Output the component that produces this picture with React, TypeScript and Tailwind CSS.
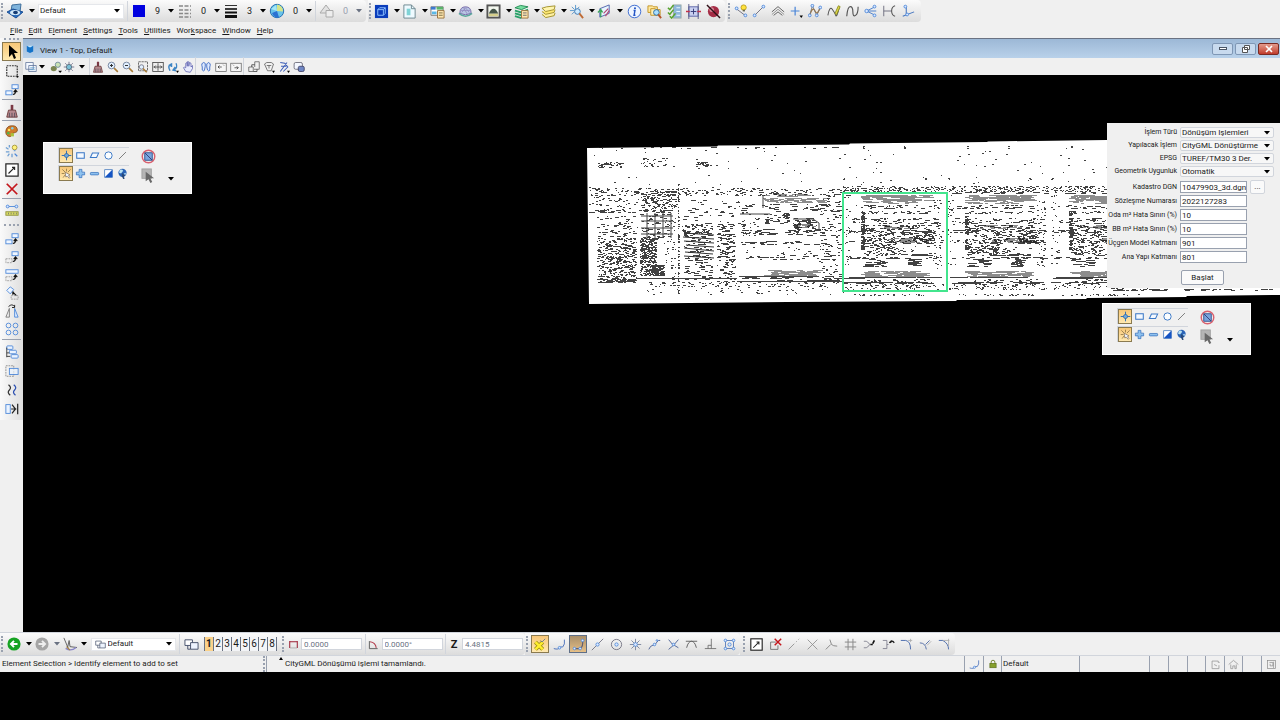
import React, { useState } from "react";

const blue = "#4a86d8";
const navy = "#2b4fb0";
const ink = "#333333";
const grey = "#8a8a8a";

function P({ d, s = ink, f = "none", w = 1 }: { d: string; s?: string; f?: string; w?: number }) {
  return <path d={d} stroke={s} fill={f} strokeWidth={w} />;
}

function Dot({ x, y, r = 1.6 }: { x: number; y: number; r?: number }) {
  return <circle cx={x} cy={y} r={r} stroke={blue} fill="#dbe8ff" />;
}

const icons: Record<string, React.ReactNode> = {
  template: <><P d="M5 2 14 1 13 9 4 8Z" s="#3f6f9c" f="#7fb4dc" /><P d="M0 9 6 6l10 3-7 6Z" s="#1c4f94" f="#2b6fc0" /><ellipse cx="8" cy="9.500" rx="5" ry="2.600" fill="#d3e9f8" /><ellipse cx="8.500" cy="9.500" rx="2.400" ry="1.800" fill="#163c74" /></>,
  swatch: <rect x="2" y="2" width="12" height="12" fill="#0000e0" />,
  styles: <path d="M2 3h12M2 7h12M2 10.500h12M2 14h12" stroke="#888" strokeWidth="1.400" strokeDasharray="4 1.500" />,
  weights: <><P d="M2 2.500h12" /><P d="M2 6h12" w={1.6} s="#111" /><P d="M2 9.500h12" w={2} s="#111" /><P d="M2 13.500h12" w={3} s="#111" /></>,
  globe: <><circle cx="8" cy="8" r="6.700" fill="#69c3ea" stroke="#2673b4" /><path d="M8 1.500a6.500 6.500 0 0 1 6 7L8 8Z" fill="#d5e58a" /><path d="M3 10 8 8l2 6.500C6 15 4 13 3 10Z" fill="#2b72d2" /><path d="M2 6 8 8 7 2Z" fill="#a5e7f5" /></>,
  triangle: <><P d="M7 2 13 10H1Z" s="#aaa" f="#e3e3e3" /><P d="M7 7.500h7v6.500H7Z" s="#aaa" f="#ededed" /></>,
  cube: <><rect x="1" y="1" width="14" height="14" fill="#0b3dbb" /><P d="M4 6h6v6H4ZM6 4h6v6M4 6l2-2M10 6l2-2M10 12l2-2" s="#8fc2ff" /></>,
  doc: <><P d="M2 1h8l4 4v10H2Z" s="#6d8790" f="#eefaff" /><P d="M10 1v4h4" s="#6d8790" /><rect x="5" y="5" width="4" height="7" fill="#7fd3d6" /></>,
  cards: <><P d="M1 3h13v9H1Z" s="#777" f="#fff" /><path d="M1 3h5v3H1z" fill="#3d7ad0" /><path d="M7 3h7v3H7z" fill="#5ab46a" /><path d="M2 8h5v3H2z" fill="#5bb8e6" /><P d="M8 7h7v8H8Z" s="#9a7340" f="#ffe7b0" /><P d="M9.500 9.500h4M9.500 12h4" s="#7a6c40" /></>,
  mesh: <><path d="M2 10q0-7 6-7t6 7q-6 3-12 0z" fill="#b9c6e4" stroke="#7468a8" /><path d="M4 9l4-5 4 5M3 7h10M6 4l4 7" stroke="#8f86bd" strokeWidth=".8" /><path d="M1 10q7 6 14 0" stroke="#5aa79d" strokeWidth="1.500" /></>,
  terrain: <><rect x="1.500" y="1.500" width="13" height="13" fill="#f3f7ef" stroke="#555" strokeWidth="2" /><path d="M3 10h10v3H3z" fill="#d6cf8c" /><path d="M3 10q2-5 5-5t5 5z" fill="#46564a" /></>,
  layersGreen: <><P d="M1 4 7 1.500 15 3 8 6Z" s="#278b56" f="#74dfa0" /><P d="M1 7 8 9 15 6" s="#29a169" w={2} /><P d="M1 10 8 12M1 13l7 2" s="#29a169" w={2} /><P d="M8 7h7v8H8Z" s="#9a7340" f="#ffe7b0" /><P d="M9.500 9.500h4M9.500 12h4" s="#6c6c6c" /></>,
  layersYellow: <><P d="M1 11l4 3.500 9-2 1-3" s="#a2912b" f="#fff0a0" /><P d="M1 8l4 3 9-2 1-3" s="#a2912b" f="#ffe871" /><P d="M1 4.500 5 8l9-2 1-4L6 3Z" s="#a2912b" f="#fff5ae" /></>,
  searchStar: <><path d="M7 1v5M1 7h5M3 3l3 3M11 3 9 5M3 11l3-3" stroke="#5997cd" /><circle cx="9" cy="8" r="3" stroke="#3b75b0" fill="#cdeaff" /><P d="M11 10l4 5" s="#bf6b35" w={2} /></>,
  sheet: <><P d="M3 5 13 1v9L3 14Z" s="#4f63ad" f="#e8f5ff" /><P d="M1 9l3-3 2 3M4 6v8" s="#3da55c" w={1.400} /><P d="M7 10l5-5M9 13l4-6" s="#b04a75" w={1.300} /></>,
  info: <><circle cx="8" cy="8" r="6.700" stroke="#3768cf" fill="#eef5ff" /><circle cx="8.500" cy="4.500" r="1.100" fill="#2455c6" /><P d="M7 7h1.500l-1 5H9" s="#2455c6" w={1.500} /></>,
  folderSearch: <><P d="M1 2h5l1 1h4v6H1Z" s="#c49423" f="#ffe9a0" /><P d="M4 5h5l1 1h4v6H4Z" s="#c49423" f="#fff1bb" /><circle cx="10" cy="9" r="3" fill="#a8deff" stroke="#2e6a9b" /><P d="M12 11l3 4" s="#b35429" w={2} /></>,
  checks: <><rect x="7" y="1" width="8" height="14" fill="#8fb7dc" stroke="#9aa" /><P d="M1 4l2 2 4-5M1 9l2 2 4-5M3 13l2 2 4-5" s="#57a42e" w={1.600} /><P d="M10 4h4M10 8h4M10 12h4" s="#e9f7ff" /></>,
  clip: <><rect x="3" y="3" width="10" height="10" fill="#c9d0f0" stroke="#5b64a9" /><P d="M3 0v16M13 0v16" s="#555a88" /><P d="M0 8h4M12 8h4" s="#c2304a" w={1.500} /><P d="M5 8h6M8 5v6" s="#333a77" /></>,
  noBall: <><circle cx="8" cy="8" r="6" fill="#a42c45" /><circle cx="6" cy="6" r="2.500" fill="#d9899a" /><P d="M1 1l14 14" s="#301018" w={1.500} /></>,
  bulbLine: <><P d="M2 5 14 14" s="#667" /><Dot x={3} y={5} /><Dot x={13} y={13} /><circle cx="11" cy="4" r="3" fill="#ffe23c" stroke="#b99b18" /><P d="M10 7.500h2.500" s="#665" w={2} /></>,
  line: <><P d="M3 13 13 3" s="#667" /><Dot x={3} y={13} /><Dot x={13} y={3} /></>,
  chevrons: <><P d="M1 9l7-6 7 6" s="#555" /><P d="M1 12l7-6 7 6" s="#888" /><P d="M3 13l5-4 5 4" s="#555" /></>,
  point: <><P d="M7 3v10M2 8h10" s={blue} w={1.400} /><path d="M12 13h4l-2 3z" fill="#000" /></>,
  bspline: <><P d="M2 13Q5 2 8 8t6-5" s="#a9793e" w={1.400} /><P d="M2 13 5 2l5 11 4-9" s="#777" /><Dot x={2} y={13} /><Dot x={5} y={2} /><Dot x={10} y={13} /><Dot x={14} y={4} /></>,
  curvePencil: <><P d="M1 13Q3 2 6 6t4 7 4-9" s="#555" w={1.200} /><P d="M9 11l4-9 2 1-4 9Z" s="#8a8a20" f="#e5dc4a" /></>,
  curve: <P d="M2 14Q3 3 6 3t3 6 3 4 3-10" s="#555" w={1.300} />,
  bisector: <><P d="M3 8 13 3M3 8l10 5M3 8h11" s="#3b75c8" /><Dot x={3} y={8} r={2} /><Dot x={12} y={3} /><Dot x={12} y={13} /></>,
  brackets: <><P d="M2 2v12M2 8h9" s="#667" /><P d="M15 2q-4 1-4 6t4 6" s="#555" w={1.200} /></>,
  perp: <><P d="M6 3v9M2 14 15 9" s="#4575bf" w={1.200} /><Dot x={5} y={3} /><Dot x={7} y={12} /></>,
  windowBox: <><P d="M1 2h10v9H1ZM5 6h10v8H5Z" s="#5a6f95" f="#f4f8ff" /><P d="M7 9h6M7 11.500h6" s="#5ea0cf" /></>,
  view: <><ellipse cx="5" cy="10" rx="4" ry="3.500" fill="#7b8650" /><circle cx="10.500" cy="5" r="3.500" stroke="#5e7890" fill="#c9e2b4" /><path d="M11 13h5l-2.500 3z" fill="#000" /></>,
  sun: <><circle cx="8" cy="8" r="3.500" fill="#7cc1d8" stroke="#456" /><P d="M8 1v3M8 12v3M1 8h3M12 8h3M3 3l2 2M11 11l2 2M13 3l-2 2M5 11l-2 2" s="#557" /></>,
  brush: <><P d="M8 1v6" s="#7a3944" w={3} /><path d="M4 7h8l2 8H2z" fill="#b7898e" stroke="#633" /><P d="M5 10v5M8 10v5M11 10v5" s="#534b58" /></>,
  zoomIn: <><circle cx="6" cy="6" r="4.500" stroke="#5a6b88" fill="#e1efff" /><P d="M4 6h4M6 4v4" w={1.400} /><P d="M9.500 9.500l5 5" s="#a87b35" w={2} /></>,
  zoomOut: <><circle cx="6" cy="6" r="4.500" stroke="#5a6b88" fill="#e1efff" /><P d="M4 6h4" w={1.400} /><P d="M9.500 9.500l5 5" s="#a87b35" w={2} /></>,
  windowArea: <><rect x="2" y="1" width="12" height="12" stroke="#444" strokeDasharray="3 1" /><circle cx="6" cy="8" r="3" stroke="#667" fill="#e0f0ff" /><P d="M8 10l5 5" s="#a87b35" w={2} /></>,
  fit: <><rect x="1" y="2" width="14" height="12" stroke="#333" /><P d="M8 3v10M2 8h12M5 6 3 8l2 2M11 6l2 2-2 2" /></>,
  rotate: <><P d="M4 13Q0 6 6 4v4M6 6H2" s="#3d85c5" w={2} /><P d="M12 3q3 6-3 9M11 8l-3 4 4 1" s="#3d85c5" w={1.800} /><path d="M12 13h4l-2 3z" fill="#000" /></>,
  hand: <P d="M5 14 2 9l1-1 2 1V3l2-1v5-6h2v6l1-5 2 1v5l2-2v4l-3 5Z" s="#5b5fae" f="#e8ebfc" />,
  feet: <><P d="M5 2q-4 1-2 6v4q2 3 3 0l1-5q1-5-2-5ZM11 2q-3 1-2 6l1 4q2 3 3 0V8q2-5-2-6Z" s="#4873c9" f="#dfeaff" w={1.300} /></>,
  prevView: <><rect x="1" y="3" width="14" height="11" stroke="#666" fill="#f6f6f6" /><P d="M4 8h5M4 8l2-2M4 8l2 2M11 5l1 1" /></>,
  nextView: <><rect x="1" y="3" width="14" height="11" stroke="#666" fill="#f6f6f6" /><P d="M6 9h5M11 9 9 7M11 9l-2 2M4 5l1 1" /></>,
  copyView: <><P d="M9 8V1h6v10H8M1 8h6v6H1Z" s="#555" /><P d="M5 8V5h4M7 14h5v-3" /></>,
  camera: <><P d="M2 4l3-2h6l3 2-3 9H6ZM5 6h6M8 6v4" s="#555" /><path d="M12 13h4l-2 3z" fill="#000" /></>,
  clipVol: <><P d="M3 2l6 1 4 5-6 6M12 2 3 14M4 7h7" s="#3f60b8" w={1.400} /><path d="M12 13h4l-2 3z" fill="#000" /></>,
  mask: <><rect x="1.500" y="2" width="11" height="9" rx="2" stroke="#556" fill="#f3f7ff" /><rect x="7" y="7" width="8" height="7" rx="2" fill="#6f87c5" stroke="#335" /></>,
  arrow: <path d="M5 1v12l3-3 2 5 2-1-2-5h4z" fill="#000" />,
  fence: <><rect x="2" y="2" width="12" height="12" stroke="#333" strokeWidth="1.400" strokeDasharray="2 1" /><path d="M13.500 13v3l2.500-1.500z" fill="#000" /></>,
  copy: <><rect x="8" y="2" width="7" height="4.500" stroke={blue} fill="#eff6ff" /><rect x="1" y="9" width="7" height="4.500" stroke={blue} fill="#eff6ff" /><P d="M9 13q3 0 3-4M10 10.500 12 8l2 2.500" w={1.400} s="#111" /></>,
  move: <><rect x="8" y="2" width="7" height="4.500" stroke={blue} fill="#eff6ff" /><rect x="1" y="10" width="7" height="4.500" stroke="#999" strokeDasharray="2 1" /><P d="M9 13q3 0 3-4M10 10.500 12 8l2 2.500" w={1.400} s="#111" /></>,
  scale: <><rect x="1" y="2" width="14" height="4" stroke={blue} fill="#eff6ff" /><rect x="1" y="10" width="7" height="4.500" stroke="#999" strokeDasharray="2 1" /><P d="M9 13q3 0 3-4M10 10.500 12 8l2 2.500" w={1.400} s="#111" /></>,
  rotateEl: <><P d="M6 1l4 3-4 5-4-4Z" s={blue} f="#eff6ff" /><P d="M9 7l4 4M10 7h-1v3" w={1.400} s="#111" /><rect x="7" y="11" width="8" height="4" stroke="#999" strokeDasharray="2 1" /></>,
  mirror: <><P d="M5 5v10H1Z" s="#777" /><P d="M11 5v10h4Z" s={blue} f="#dceaff" /><P d="M4 3q4-4 7 0M11 1v3H8" s="#111" /></>,
  array: <><circle cx="4" cy="4" r="2.700" stroke={blue} /><circle cx="12" cy="4" r="2.700" stroke={blue} /><circle cx="4" cy="12" r="2.700" stroke={blue} /><circle cx="12" cy="12" r="2.700" stroke={blue} /></>,
  palette: <><path d="M8 1C3 1 1 5 1 9s4 6 6 5 0-3 3-4 6-1 5-5-4-4-7-4z" fill="#cf7b2c" stroke="#834511" /><circle cx="5" cy="6" r="1.500" fill="#ffe35a" /><circle cx="9" cy="4" r="1.500" fill="#7bd3f1" /><circle cx="4" cy="10" r="1.600" fill="#56b04d" /><path d="M7 10h4v4H7z" fill="#a9c23a" /></>,
  bulb: <><circle cx="11" cy="4" r="2.700" fill="#fff17b" stroke="#a59530" /><P d="M10 7.500h2M1 4l3 2M5 1v3M1 9h4M3 14l2-3M8 15v-4" s="#6fa0d4" w={1.500} /><P d="M11 11l3 3" s="#4a86d8" w={1.500} /></>,
  group: <><rect x="1" y="1" width="14" height="14" stroke="#222" strokeWidth="1.400" fill="#fff" /><P d="M4 12l7-7M8 5h3v3" s="#222" w={1.300} /></>,
  cross: <P d="M2 2l12 12M14 2 2 14" s="#c4161c" w={2} />,
  measure: <><P d="M2 4h12" s={blue} /><Dot x={3} y={4} /><Dot x={13} y={4} /><rect x="1" y="10" width="14" height="4" fill="#d9dd67" stroke="#8e9139" /><P d="M4 11v2M7 11v2M10 11v2M13 11v2" s="#776" /></>,
  align: <><rect x="2" y="1" width="7" height="4" rx="1" stroke={blue} fill="#eaf3ff" /><rect x="5" y="6" width="8" height="4" rx="1" stroke={blue} fill="#eaf3ff" /><rect x="7" y="11" width="8" height="4" rx="1" stroke={blue} fill="#eaf3ff" /><P d="M2 3v11M2 9h3M2 13h4" /></>,
  stretch: <><rect x="1" y="2" width="9" height="12" stroke="#888" strokeDasharray="2 1" /><rect x="5" y="5" width="10" height="7" stroke={blue} fill="#eaf3ff" fillOpacity=".7" /></>,
  parallel: <><P d="M4 2q4 3 1 6t1 6" s="#333" w={1.400} /><P d="M10 2q4 3 1 6t1 6" s={navy} w={1.400} /></>,
  toEdge: <><rect x="1" y="3" width="5" height="10" stroke={blue} fill="#eaf3ff" /><P d="M14.500 2v12M8 3l4 5-4 5M7 8h6" w={1.400} s="#222" /></>,
  individual: <><P d="M8 1v14M1 8h14" s="#2d6fb8" w={1.400} /><circle cx="8" cy="8" r="3" fill="#6ea9df" stroke="#2d5f99" /></>,
  block: <rect x="2.500" y="4" width="11" height="8" stroke="#3b78c6" strokeWidth="1.500" fill="#f4f9ff" />,
  shape: <P d="M5 4.500h9L11 11H2Z" s="#3b78c6" f="#f4f9ff" w={1.500} />,
  circle: <circle cx="8" cy="8" r="5.300" stroke="#3b78c6" strokeWidth="1.400" fill="#fafdff" />,
  slash: <P d="M3 13 13 3" s="#666" w={1.200} />,
  newSel: <><P d="M8 1v4M2 2l4 4M1 8h4M14 2l-4 4M3 14l3-4" s="#7a6538" /><path d="M6 6l7 4-2 1 2 3-1 1-3-3-2 1z" fill="#eef4ff" stroke="#765" /></>,
  plus: <path d="M6 2h4v4h4v4h-4v4H6v-4H2V6h4z" fill="#8ec1ee" stroke="#2d6ab9" />,
  minus: <rect x="2" y="6.500" width="12" height="3.500" rx="1" fill="#8ec1ee" stroke="#2d6ab9" />,
  invert: <><rect x="2.500" y="2.500" width="11" height="11" fill="#fff" stroke="#2a66b5" /><path d="M13.500 2.500v11h-11z" fill="#1554c4" /></>,
  world: <><circle cx="8" cy="7" r="6" fill="#2a64b8" /><path d="M4 3q3-2 5 1L6 8 3 7zM10 8l3-1-1 4z" fill="#b9e2f2" /><path d="M7 7l5 4-2 1 1 4-2 0-2-4z" fill="#284a7a" /></>,
  disable: <><rect x="4" y="4" width="8" height="8" fill="#79a4dd" stroke="#34558f" /><circle cx="8" cy="8" r="6.700" stroke="#d9606e" strokeWidth="1.500" /><P d="M4 4l8 8" s="#333f77" /></>,
  handle: <><rect x="1" y="1" width="10" height="10" fill="#b5b5b5" stroke="#a0a0a0" /><path d="M5 4v10l3-2 2 4 2-1-2-4h4z" fill="#686868" /></>,
  back: <><circle cx="8" cy="8" r="7.500" fill="#16a322" /><P d="M12 8H5M8 4.500 4.500 8 8 11.500" s="#fff" w={2.200} /></>,
  forward: <><circle cx="8" cy="8" r="7.500" fill="#a5a5a5" /><P d="M4 8h7M8 4.500 11.500 8 8 11.500" s="#eee" w={2.200} /></>,
  compass: <><P d="M1 1l5 12M5 13 7 4l1 7 8 1" s="#555" /><P d="M3 13q6 4 12-1" s="#8885c8" w={1.500} /><P d="M4 11l4 4" s="#a88440" w={1.400} /></>,
  models: <><P d="M1 3h8v6H1Z" s="#44506b" f="#fff" /><P d="M7 6h8v7H7Z" s="#44506b" f="#eef4ff" /><P d="M4 9v4h3" s="#44506b" /></>,
  dist: <><P d="M2 4h12M2.500 3v10M13.500 3v10" s="#9d2235" w={1.500} /><P d="M3 13h10" s="#999" /></>,
  angle: <><P d="M2 3v11h12" s="#555" w={1.300} /><P d="M3 4q8 1 9 9" s="#b33a4a" w={1.500} /></>,
  accuKey: <><P d="M3 5l9 9M12 5 3 14" s="#9a8d12" w={5} /><P d="M3 5l9 9M12 5 3 14" s="#ffee2e" w={3} /><P d="M9 3l2 2 4-4" s="#57738e" /></>,
  snapNear: <><P d="M1 13q6 2 8-2h3q3-3 2-9" s="#4f73bb" w={1.200} /><Dot x={8} y={12} /></>,
  keypoint: <><P d="M3 13h7q4-2 3-10" s="#5d5b70" w={1.400} /><Dot x={3} y={13} /><Dot x={10} y={13} /><Dot x={13} y={3} /></>,
  midpoint: <><P d="M1 15 15 1" s="#667" /><Dot x={8} y={8} r={2} /></>,
  center: <><circle cx="8" cy="8" r="6.300" stroke="#667" /><Dot x={8} y={8} r={2} /></>,
  origin: <><P d="M8 1v14M1 8h14M3 3l10 10M13 3 3 13" s="#6c7893" /><Dot x={8} y={8} r={2.300} /></>,
  bisect: <><P d="M1 14q2-5 5-5t5-4q2-3 4-2" s="#556a9a" w={1.200} /><Dot x={8} y={8} /><Dot x={11} y={3} r={1} /></>,
  intersect: <><P d="M2 2q3 6 12 10M14 2Q9 9 2 14" s="#556a9a" w={1.200} /><Dot x={8} y={8} /></>,
  tangent: <P d="M1 4h14M2 12q2-8 6-8t6 8" s="#666" w={1.200} />,
  perpSnap: <P d="M1 13h14M9 1v12M9 9H5v4" s="#666" />,
  through: <><rect x="3" y="3" width="10" height="10" stroke="#4d6fae" /><Dot x={3} y={3} /><Dot x={13} y={3} /><Dot x={3} y={13} /><Dot x={13} y={13} /><Dot x={8} y={8} r={2} /></>,
  delVertex: <><P d="M9 5H2v9h9V9" s="#666" /><P d="M7 1l8 8M15 1 7 9" s="#c4161c" w={1.800} /></>,
  partial: <P d="M2 14 9 7M11 5l1-1M14 2l1-1" s={grey} />,
  trimX: <P d="M2 2l12 12M14 2 2 14" s={grey} />,
  trimY: <P d="M1 14 7 8M6 2l2 6q2 2 7 2" s={grey} w={1.200} />,
  hash: <P d="M5 1v14M11 1v14M1 5h14M1 11h14" s={grey} w={1.200} />,
  insertV: <><P d="M1 4h3q8 4 0 8H1" s="#778" /><P d="M9 8h3M12 7l2-4" s="#111" w={2} /></>,
  removeV: <><P d="M1 3h5v10H1M6 8h2" s="#778" /><P d="M10 6q3-4 5 0M12 3l-3 3" s="#222" w={1.600} /></>,
  fillet: <><P d="M1 3h6q6 1 6 11" s="#4f6fae" w={1.200} /><P d="M10 3h5M13 1v4" s="#aaa" /></>,
  chamfer: <><P d="M1 6q7 0 8 8M8 8l5-5" s="#5b74aa" w={1.200} /><P d="M10 9l5-5" s="#aaa" /></>,
  extend: <><P d="M1 3h5q7 4 7 11" s="#4f6fae" w={1.200} /><P d="M6 3h8M13 1v9" s="#aaa" /></>,
  lock: <><P d="M5 8V5q0-3 3-3t3 3v3" s="#7a8a3a" w={1.600} /><rect x="3" y="7" width="10" height="7" fill="#86a02c" stroke="#566a16" /></>,
  flag: <P d="M3 3h9v2h2M3 3v11h10v-5M6 8l4 2" s="#999" w={1.200} />,
  home: <P d="M1 8l7-6 7 6M4 8v6h3v-4h3v4h2V8" s="#999" w={1.200} />,
  design: <><rect x="2" y="2" width="12" height="12" stroke="#888" /><P d="M5 5h5v5H6V7M11 4v9" s="#888" /></>,
};

function Icon({ name, className = "size-4" }: { name: string; className?: string }) {
  return <svg viewBox="0 0 16 16" fill="none" aria-hidden="true" className={`${className} shrink-0`}>{icons[name]}</svg>;
}

function Caret({ className = "text-black" }: { className?: string }) {
  return (
    <svg viewBox="0 0 6 4" aria-hidden="true" className={`h-1 w-1.5 shrink-0 ${className}`}>
      <path d="M0 0h6L3 3.500z" fill="currentColor" />
    </svg>
  );
}

const looks = {
  plain: "",
  on: "border border-[#8a7a50] bg-linear-to-b from-[#f7c777] to-[#ffe9b0]",
  pressed: "border border-[#5f6f88] bg-linear-to-b from-[#a98f6a] to-[#e6bf86]",
};

function Tool({ name, className = "h-5 w-[18px]", icon, look = "plain" }: { name: string; className?: string; icon?: string; look?: keyof typeof looks }) {
  return (
    <button type="button" aria-label={name} className={`flex shrink-0 items-center justify-center ${className} ${looks[look]}`}>
      <Icon name={name} className={icon} />
    </button>
  );
}

// icon button with its drop-down arrow and optional value
function DropTool({ name, value, className = "w-7", muted = false, icon }: { name: string; value?: string; className?: string; muted?: boolean; icon?: string }) {
  return (
    <button type="button" aria-label={name} className={`flex h-5 shrink-0 items-center justify-between ${className} ${muted ? "text-gray-400" : ""}`}>
      <Icon name={name} className={icon} />
      {value && <span className="text-[9px]">{value}</span>}
      <Caret className={muted ? "text-gray-500" : "text-black"} />
    </button>
  );
}

function Grip({ row = false }: { row?: boolean }) {
  return <span className={row ? "mx-1 h-0 shrink-0 border-t-2 border-dotted border-gray-400" : "mx-px h-4 w-0 shrink-0 border-l-2 border-dotted border-gray-400"} />;
}

function Sep() {
  return <span className="h-5 w-px shrink-0 bg-gray-300" />;
}

const bar = "flex h-[22px] shrink-0 items-center rounded-r bg-linear-to-b from-[#fbfbfb] to-[#dcdcdc]";

function TopBars() {
  return (
    <div className="flex gap-0.5">
      <div className={`${bar} w-[366px] justify-between pr-1`}>
        <Grip />
        <DropTool name="template" className="w-7" />
        <span className="relative flex items-center">
          <select aria-label="Active level" className="h-[15px] w-[86px] appearance-none border border-gray-200 bg-white pl-px leading-none">
            <option>Default</option>
          </select>
          <span className="pointer-events-none absolute right-1"><Caret /></span>
        </span>
        <Sep />
        <DropTool name="swatch" value="9" className="w-[43px]" />
        <DropTool name="styles" value="0" className="w-[43px]" />
        <DropTool name="weights" value="3" className="w-[43px]" />
        <DropTool name="globe" value="0" className="w-[43px]" />
        <Sep />
        <DropTool name="triangle" value="0" className="w-[43px]" muted />
      </div>
      <div className={`${bar} w-[357px] justify-between pr-0.5`}>
        <Grip />
        {["cube", "doc", "cards", "mesh", "terrain", "layersGreen", "layersYellow", "searchStar", "sheet"].map(n => (
          <DropTool key={n} name={n} className="w-[26px]" icon="size-[15px]" />
        ))}
        {["info", "folderSearch", "checks", "clip", "noBall"].map(n => <Tool key={n} name={n} icon="size-[15px]" />)}
      </div>
      <div className={`${bar} w-[194px] justify-between pr-1`}>
        <Grip />
        {["bulbLine", "line", "chevrons", "point", "bspline", "curvePencil", "curve", "bisector", "brackets", "perp"].map(n => (
          <Tool key={n} name={n} icon="size-[14px]" />
        ))}
      </div>
    </div>
  );
}

const menus = [
  ["", "F", "ile"], ["", "E", "dit"], ["E", "l", "ement"], ["", "S", "ettings"], ["", "T", "ools"],
  ["", "U", "tilities"], ["Wor", "k", "space"], ["", "W", "indow"], ["", "H", "elp"],
];

function MenuBar() {
  return (
    <nav className="flex h-4 items-center gap-1.5 pt-0.5 pl-[10px]">
      {menus.map(([a, u, b]) => (
        <button key={a + u + b} type="button" className="leading-none">{a}<span className="underline">{u}</span>{b}</button>
      ))}
    </nav>
  );
}

function LeftBar() {
  const rule = <span className="mx-0.5 h-0.5 border-t border-gray-400" />;
  const small = "h-[19px] w-full";
  return (
    <aside className="flex w-[23px] shrink-0 flex-col">
      <div className="flex flex-col bg-linear-to-r from-[#fafafa] to-[#dedede] pb-0.5">
        <div className="flex h-1 flex-col"><Grip row /></div>
        <Tool name="arrow" className="mx-0.5 h-[19px]" look="on" />
        <Tool name="fence" className={small} icon="size-[14px]" />
        <Tool name="copy" className={small} icon="size-[14px]" />
        {rule}
        <Tool name="brush" className={small} icon="size-[14px]" />
        {rule}
        <Tool name="palette" className={small} icon="size-[13px]" />
        <Tool name="bulb" className={small} icon="size-[14px]" />
        <Tool name="group" className={small} icon="size-[14px]" />
        <Tool name="cross" className={small} icon="size-[14px]" />
        {rule}
        <Tool name="measure" className={small} icon="size-[14px]" />
        <div className="flex h-[11px] flex-col justify-center"><Grip row /></div>
        {["copy", "move", "scale", "rotateEl", "mirror", "array"].map(n => (
          <Tool key={n} name={n} className="h-[18px] w-full" icon="size-[14px]" />
        ))}
        <span className="mx-0.5 my-px h-0.5 border-t border-gray-400" />
        {["align", "stretch", "parallel", "toEdge"].map(n => (
          <Tool key={n} name={n} className={small} icon="size-[14px]" />
        ))}
      </div>
    </aside>
  );
}

function ViewHeader() {
  const small = "h-4 w-[15px]";
  const winButton = "flex h-3 w-[21px] items-center justify-center rounded-xs border";
  return (
    <header>
      <div className="flex h-5 items-center gap-1.5 border-t border-gray-500 bg-linear-to-b from-[#9cb8d6] to-[#b9d1ea] pr-px pl-[3px]">
        <svg viewBox="0 0 10 10" className="size-2" aria-hidden="true"><path d="M1 1l4 1v8L1 8zM5 2l4-1v7l-4 2z" fill="#1473c9" /><path d="M1 1h8L5 3z" fill="#bfe6ff" /></svg>
        <h1 className="flex-1 pt-1 text-[8px]">View 1 - Top, Default</h1>
        <div className="flex gap-0.5">
          <button type="button" aria-label="Minimize" className={`${winButton} border-[#7f97b5] bg-[#c8daee]`}>
            <span className="h-[3px] w-2 border border-gray-600 bg-white" />
          </button>
          <button type="button" aria-label="Restore" className={`${winButton} border-[#7f97b5] bg-[#c8daee]`}>
            <svg viewBox="0 0 10 8" className="h-2 w-2.5" fill="#fff" stroke="#555" aria-hidden="true"><path d="M3.500.5h5v4h-5zM1.500 2.500h5v5h-5z" /></svg>
          </button>
          <button type="button" aria-label="Close" className={`${winButton} border-[#7a2a22] bg-linear-to-b from-[#e29a8c] to-[#c0392b]`}>
            <svg viewBox="0 0 8 8" className="size-2" stroke="#fff" strokeWidth="1.600" aria-hidden="true"><path d="M1 1l6 6M7 1 1 7" /></svg>
          </button>
        </div>
      </div>
      <div className="flex h-[17px] items-center bg-[#f0f0f0] pl-0.5">
        <DropTool name="windowBox" className="mr-1 w-5" icon="size-3" />
        <Tool name="view" className="h-4 w-[14px]" icon="size-3" />
        <DropTool name="sun" className="mr-1 w-[22px]" icon="size-3" />
        <Sep />
        {["brush", "zoomIn", "zoomOut", "windowArea", "fit", "rotate", "hand"].map(n => <Tool key={n} name={n} className={small} icon="size-3" />)}
        <Sep />
        <span className="w-0.5" />
        {["feet", "prevView", "nextView"].map(n => <Tool key={n} name={n} className={small} icon="size-3" />)}
        <Sep />
        <span className="w-0.5" />
        {["copyView", "camera", "clipVol", "mask"].map(n => <Tool key={n} name={n} className={small} icon="size-3" />)}
      </div>
    </header>
  );
}

function SelectionPalette({ className }: { className: string }) {
  const strip = "flex border-t border-l border-gray-300";
  return (
    <section className={`absolute flex gap-3 border border-white bg-[#f0f0f0] pt-1 pr-[17px] pb-2.5 pl-[14px] ${className}`}>
      <div className="flex flex-col gap-0.5">
        <div className={strip}>
          {["individual", "block", "shape", "circle", "slash"].map((n, i) => (
            <Tool key={n} name={n} className="h-[15px] w-[14px]" icon="size-[11px]" look={i === 0 ? "on" : "plain"} />
          ))}
        </div>
        <div className={strip}>
          {["newSel", "plus", "minus", "invert", "world"].map((n, i) => (
            <Tool key={n} name={n} className="h-[15px] w-[14px]" icon="size-[11px]" look={i === 0 ? "on" : "plain"} />
          ))}
        </div>
      </div>
      <div className="flex flex-col gap-1 pt-0.5">
        <Tool name="disable" className="size-[15px]" icon="size-[15px]" />
        <Tool name="handle" className="size-[15px]" icon="size-[15px]" />
      </div>
      <button type="button" aria-label="More" className="self-end pb-0.5"><Caret /></button>
    </section>
  );
}

const choices = [
  ["İşlem Türü", "Dönüşüm İşlemleri"],
  ["Yapılacak İşlem", "CityGML Dönüştürme"],
  ["EPSG", "TUREF/TM30 3 Der."],
  ["Geometrik Uygunluk", "Otomatik"],
];

const fields = [
  ["Kadastro DGN", "10479903_3d.dgn"],
  ["Sözleşme Numarası", "2022127283"],
  ["Oda m² Hata Sınırı (%)", "10"],
  ["BB m² Hata Sınırı (%)", "10"],
  ["Üçgen Model Katmanı", "901"],
  ["Ana Yapı Katmanı", "801"],
];

function ProcessPanel() {
  const [values, setValues] = useState<Record<string, string>>(Object.fromEntries(fields));
  const label = "flex w-[70px] shrink-0 justify-end whitespace-nowrap text-[7px]";

  return (
    <form className="absolute top-12 right-0 flex w-[173px] flex-col bg-[#f0f0f0] pt-[3px] pb-[3px]" onSubmit={e => e.preventDefault()}>
      {choices.map(([name, value]) => (
        <div key={name} className="flex h-[13px] items-center gap-[3px]">
          <label htmlFor={name} className={label}>{name}</label>
          <span className="relative flex items-center">
            <select id={name} className="h-[11px] w-[94px] appearance-none rounded-xs border border-gray-300 bg-[#f7f7f7] pl-px leading-none">
              <option>{value}</option>
            </select>
            <span className="pointer-events-none absolute right-1"><Caret /></span>
          </span>
        </div>
      ))}
      <div className="flex flex-col pt-0.5">
        {fields.map(([name], i) => (
          <div key={name} className="flex h-[14px] items-center gap-[3px]">
            <label htmlFor={name} className={label}>{name}</label>
            <input
              id={name}
              className="h-3 w-[67px] border border-gray-400 bg-white pl-px leading-none"
              value={values[name]}
              onChange={e => setValues(v => ({ ...v, [name]: e.target.value }))}
            />
            {i === 0 && <button type="button" aria-label="Browse" className="h-[14px] w-[15px] rounded-xs border border-gray-300 bg-[#fafafa] leading-none">...</button>}
          </div>
        ))}
      </div>
      <button type="submit" className="mt-1.5 ml-[74px] h-[15px] w-[43px] rounded-xs border border-gray-400 bg-[#fafafa] leading-none">Başlat</button>
    </form>
  );
}

// [x, y, width, height, strokes, shortest, longest]
type Band = [number, number, number, number, number, number, number];

const facade: Band[] = [
  [2, 8, 520, 40, 90, 1, 2], [11, 22, 28, 6, 45, 1, 2], [54, 18, 36, 9, 30, 1, 2], [109, 22, 14, 5, 30, 1, 3],
  [5, 7, 255, 2, 20, 1, 6], [2, 48, 260, 8, 230, 1, 3], [2, 55, 55, 18, 50, 1, 3], [54, 51, 38, 20, 130, 1, 3], [2, 70, 90, 3, 30, 2, 6],
  [10, 76, 42, 22, 60, 1, 4], [10, 98, 41, 43, 400, 1, 3], [10, 139, 41, 4, 45, 2, 6],
  [53, 74, 32, 26, 60, 1, 4], [53, 98, 18, 38, 380, 1, 2], [64, 125, 15, 11, 100, 1, 3], [76, 100, 9, 30, 10, 1, 2],
  [91, 44, 2, 112, 60, 1, 2], [84, 50, 6, 90, 40, 1, 2], [95, 84, 32, 10, 70, 1, 3], [96, 94, 31, 46, 110, 1, 5],
  [95, 60, 60, 24, 40, 1, 5], [130, 84, 20, 34, 100, 1, 4], [130, 118, 20, 24, 50, 1, 4],
  [60, 142, 200, 5, 90, 1, 3], [60, 147, 200, 8, 40, 1, 2],
  [153, 64, 105, 8, 50, 1, 7], [154, 72, 20, 24, 35, 1, 3], [176, 72, 28, 12, 40, 1, 5], [206, 78, 26, 11, 45, 1, 5],
  [154, 89, 104, 7, 60, 1, 6], [154, 101, 104, 4, 30, 2, 7], [158, 106, 90, 12, 25, 1, 3], [154, 115, 104, 5, 25, 2, 7],
  [153, 136, 105, 6, 45, 2, 10], [232, 48, 24, 92, 110, 1, 3],
];

const bay: Band[] = [
  [0, 46, 104, 6, 160, 1, 2], [4, 52, 100, 2, 20, 2, 7], [10, 65, 90, 4, 35, 1, 5], [18, 71, 74, 3, 30, 1, 4],
  [8, 78, 92, 6, 55, 1, 4], [18, 85, 72, 5, 45, 1, 5], [2, 90, 100, 3, 35, 1, 6], [20, 90, 34, 26, 140, 1, 3],
  [18, 72, 5, 38, 60, 1, 4], [70, 90, 24, 14, 60, 1, 4], [45, 93, 46, 11, 45, 1, 5], [2, 100, 100, 3, 25, 1, 3],
  [24, 106, 66, 9, 30, 1, 3], [45, 114, 46, 2, 14, 3, 9], [2, 117, 100, 2, 24, 2, 5], [20, 119, 26, 8, 18, 3, 9],
  [64, 119, 16, 8, 24, 2, 9], [0, 137, 100, 1, 10, 10, 26], [0, 142, 100, 2, 16, 4, 14], [22, 139, 70, 4, 30, 1, 3],
  [2, 144, 100, 6, 80, 1, 2], [10, 154, 80, 2, 25, 1, 2], [90, 60, 10, 70, 50, 1, 2], [0, 55, 10, 70, 30, 1, 2],
  [20, 6, 2, 3, 6, 1, 2], [61, 6, 2, 3, 6, 1, 2], [0, 38, 4, 2, 4, 1, 2], [82, 38, 4, 2, 4, 1, 2],
];

// denser courses drawn in grey under the black strokes
const greyFacade: Band[] = [[176, 58, 66, 5, 60, 3, 10], [177, 130, 60, 6, 60, 3, 10], [176, 54, 50, 3, 18, 3, 9], [206, 84, 24, 4, 14, 3, 8]];
const greyBay: Band[] = [[18, 55, 74, 6, 80, 4, 12], [18, 61, 60, 3, 20, 3, 9], [18, 131, 70, 6, 75, 4, 12], [45, 98, 46, 5, 30, 3, 9], [30, 85, 50, 4, 20, 3, 8]];

function scatter(bands: Band[], dx: number, seed: number) {
  let s = seed;
  const rnd = () => {
    s = (s * 1664525 + 1013904223) % 4294967296;
    return s / 4294967296;
  };
  let d = "";
  for (const [x, y, w, h, n, lo, hi] of bands) {
    for (let i = 0; i < n; i++) {
      const len = Math.round(lo + rnd() * (hi - lo));
      const px = Math.floor(x + dx + rnd() * Math.max(1, w - len));
      const py = Math.floor(y + rnd() * h);
      d += `M${px} ${py}.5h${len}`;
    }
  }
  return d;
}

const bays = [256, 360, 464];
const marks = scatter(facade, 0, 7) + bays.map((x, i) => scatter(bay, x, 31 + i)).join("") + scatter([[520, 149, 170, 2, 40, 2, 7]], 0, 5);
const shades = scatter(greyFacade, 0, 11) + bays.map((x, i) => scatter(greyBay, x, 71 + i)).join("");

function Facade() {
  return (
    <svg viewBox="0 0 693 164" className="absolute top-[65px] right-0 h-[164px] w-[693px]" role="img" aria-label="Facade drawing">
      <path d="M0 8 130 6.500 131 5.500 262 4.500 263 3.500 400 2 401 1.500 520 0H693V155L600 156 599 157 500 158 499 159 370 160 369 161 200 162 2 164Z" fill="#fff" />
      <path d={shades} stroke="#8c8c8c" shapeRendering="crispEdges" />
      <path d={marks} stroke="#111" strokeOpacity=".8" shapeRendering="crispEdges" />
      <path d="M54 76h32M54 81h32M54 88h32M54 94h32M60 73v27M68 73v27M76 73v25M84 73v25M176 56v12M153 74h30M206 79h20l6 4v8M560 138h40" stroke="#444" fill="none" />
      <path d="M97 93l30 2M96 97l31 2M97 101l30 2M99 105l28 2M97 108l30 3M98 112l28 2M97 116l30 2" stroke="#333" />
      <path d="M50 138.500h100M152 136.500h80M150 141.500h106M256 138.500h22M256 142.500h50M466 138.500h40" stroke="#444" />
      <rect x="256" y="53" width="104" height="98" fill="none" stroke="#42e58d" strokeWidth="2" />
    </svg>
  );
}

function BottomBars() {
  const box = "h-3 w-[61px] border border-gray-300 bg-white pl-0.5 leading-none text-gray-500";
  const btn = "h-5 w-[17px]";
  return (
    <div className="flex h-6 items-center border-y border-gray-300 bg-[#f0f0f0]">
      <div className={`${bar} w-[281px] justify-between pr-1`}>
        <Grip />
        <DropTool name="back" className="w-[25px]" icon="size-[14px]" />
        <DropTool name="forward" className="w-[25px]" icon="size-[14px]" muted />
        <DropTool name="compass" className="w-6" icon="size-[14px]" />
        <span className="relative flex items-center">
          <span className="pointer-events-none absolute left-1"><Icon name="models" className="size-[11px]" /></span>
          <select aria-label="View group" className="h-[13px] w-[85px] appearance-none border border-gray-200 bg-white pl-4 leading-none">
            <option>Default</option>
          </select>
          <span className="pointer-events-none absolute right-1"><Caret /></span>
        </span>
        <Sep />
        <Tool name="models" className="h-5 w-[18px]" icon="size-[15px]" />
        <div className="flex border-r border-gray-500">
          {[1, 2, 3, 4, 5, 6, 7, 8].map(n => (
            <button key={n} type="button" className={`h-[14px] w-[9px] border-l border-gray-500 text-[10px] leading-none ${n === 1 ? "bg-[#fbd28a] font-bold" : "bg-gray-100"}`}>{n}</button>
          ))}
        </div>
      </div>
      <div className={`${bar} w-[244px] justify-between pr-0.5`}>
        <Grip />
        <Icon name="dist" className="size-[11px]" />
        <input aria-label="Distance" className={box} defaultValue="0.0000" />
        <Sep />
        <Icon name="angle" className="size-[11px]" />
        <input aria-label="Angle" className={box} defaultValue="0.0000°" />
        <Sep />
        <b className="w-[11px] text-center text-[11px]">Z</b>
        <input aria-label="Z" className={box} defaultValue="4.4815" />
      </div>
      <div className={`${bar} w-[215px] justify-between pr-0.5`}>
        <Grip />
        <Tool name="accuKey" className="size-[18px]" icon="size-[13px]" look="on" />
        <Tool name="snapNear" className={btn} icon="size-[13px]" />
        <Tool name="keypoint" className="size-[18px]" icon="size-[13px]" look="pressed" />
        {["midpoint", "center", "origin", "bisect", "intersect", "tangent", "perpSnap", "through"].map(n => (
          <Tool key={n} name={n} className={btn} icon="size-[13px]" />
        ))}
      </div>
      <div className={`${bar} w-[215px] justify-between pr-0.5 pl-0.5`}>
        <Grip />
        {["group", "delVertex", "partial", "trimX", "trimY", "hash", "insertV", "removeV", "fillet", "chamfer", "extend"].map(n => (
          <Tool key={n} name={n} className={btn} icon="size-[13px]" />
        ))}
      </div>
    </div>
  );
}

function StatusBar() {
  const cell = "flex h-full shrink-0 items-center justify-center border-l border-gray-400";
  return (
    <footer className="flex h-4 items-center bg-[#f0f0f0]">
      <p className="w-[262px] pl-0.5">Element Selection &gt; Identify element to add to set</p>
      <Grip />
      <p className="flex h-full flex-1 items-center gap-0.5 border-l border-gray-400 pl-3">
        <span className="self-start"><svg viewBox="0 0 4 3" className="mt-px h-[3px] w-1" aria-hidden="true"><path d="M0 3 2 0l2 3z" /></svg></span>
        CityGML Dönüşümü işlemi tamamlandı.
      </p>
      <span className={`${cell} w-[19px]`}><Icon name="snapNear" className="size-[11px]" /></span>
      <span className={`${cell} w-[18px]`}><Icon name="lock" className="size-[10px]" /></span>
      <span className="flex h-full w-[78px] shrink-0 items-center border-l border-gray-400 pl-px">Default</span>
      <span className={`${cell} w-[70px]`} />
      <span className={`${cell} w-[19px]`} />
      <span className={`${cell} w-[19px]`} />
      <span className={`${cell} w-[18px]`} />
      <span className={`${cell} w-[19px]`}><Icon name="flag" className="size-[11px]" /></span>
      <span className={`${cell} w-[18px]`}><Icon name="home" className="size-[11px]" /></span>
      <span className={`${cell} w-[19px]`} />
      <span className={`${cell} w-[19px]`}><Icon name="design" className="size-[11px]" /></span>
    </footer>
  );
}

export default function App() {
  return (
    <div className="flex min-h-screen flex-col bg-black pb-12 font-['Roboto','Liberation_Sans',sans-serif] text-[8px] leading-none text-[#1a1a1a]">
      <div className="flex flex-1 flex-col bg-[#f0f0f0]">
        <TopBars />
        <MenuBar />
        <div className="flex flex-1">
          <LeftBar />
          <main className="flex min-w-0 flex-1 flex-col">
            <ViewHeader />
            <div className="relative flex-1 overflow-hidden bg-black">
              <Facade />
              <SelectionPalette className="top-[67px] left-5" />
              <ProcessPanel />
              <SelectionPalette className="top-[228px] right-[29px]" />
            </div>
          </main>
        </div>
        <BottomBars />
        <StatusBar />
      </div>
    </div>
  );
}
